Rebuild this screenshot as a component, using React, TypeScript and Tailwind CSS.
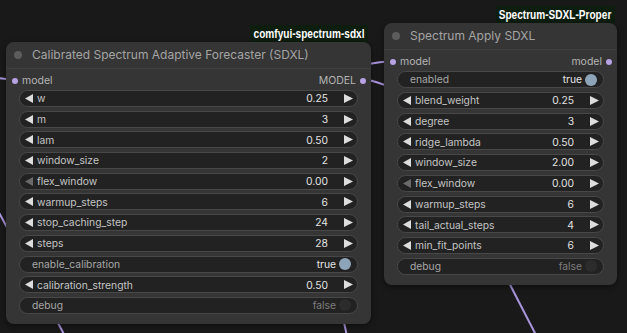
import React from 'react';

type Widget =
  | { kind: 'num'; label: string; value: string; dimLeft?: boolean }
  | { kind: 'toggle'; label: string; on: boolean };

const leftWidgets: Widget[] = [
  { kind: 'num', label: 'w', value: '0.25' },
  { kind: 'num', label: 'm', value: '3' },
  { kind: 'num', label: 'lam', value: '0.50' },
  { kind: 'num', label: 'window_size', value: '2' },
  { kind: 'num', label: 'flex_window', value: '0.00', dimLeft: true },
  { kind: 'num', label: 'warmup_steps', value: '6' },
  { kind: 'num', label: 'stop_caching_step', value: '24' },
  { kind: 'num', label: 'steps', value: '28' },
  { kind: 'toggle', label: 'enable_calibration', on: true },
  { kind: 'num', label: 'calibration_strength', value: '0.50' },
  { kind: 'toggle', label: 'debug', on: false },
];

const rightWidgets: Widget[] = [
  { kind: 'toggle', label: 'enabled', on: true },
  { kind: 'num', label: 'blend_weight', value: '0.25' },
  { kind: 'num', label: 'degree', value: '3' },
  { kind: 'num', label: 'ridge_lambda', value: '0.50' },
  { kind: 'num', label: 'window_size', value: '2.00' },
  { kind: 'num', label: 'flex_window', value: '0.00', dimLeft: true },
  { kind: 'num', label: 'warmup_steps', value: '6' },
  { kind: 'num', label: 'tail_actual_steps', value: '4' },
  { kind: 'num', label: 'min_fit_points', value: '6' },
  { kind: 'toggle', label: 'debug', on: false },
];

const LeftArrow = ({ dim }: { dim?: boolean }) => (
  <svg width="8" height="9" viewBox="0 0 8 9" className="shrink-0">
    <path d="M0 4.5 L8 0 L8 9 Z" fill={dim ? '#6a6a6a' : '#dddddd'} />
  </svg>
);

const RightArrow = () => (
  <svg width="9" height="9" viewBox="0 0 9 9" className="ml-[16px] shrink-0">
    <path d="M9 4.5 L0 0 L0 9 Z" fill="#dddddd" />
  </svg>
);

const WidgetRow = ({ w }: { w: Widget }) => {
  if (w.kind === 'num') {
    return (
      <div className="flex h-[17px] items-center rounded-full border border-[#484848] bg-[#222222] pl-[5px] pr-[4px] text-[10.3px] leading-none">
        <LeftArrow dim={w.dimLeft} />
        <span className="ml-[4px] text-[#c4c4c4]">{w.label}</span>
        <span className="ml-auto text-[#e2e2e2]">{w.value}</span>
        <RightArrow />
      </div>
    );
  }
  return (
    <div className="flex h-[17px] items-center rounded-full border border-[#484848] bg-[#222222] pl-[12px] pr-[6px] text-[10.3px] leading-none">
      <span className="text-[#a6a6a6]">{w.label}</span>
      <span className={`ml-auto ${w.on ? 'text-[#e2e2e2]' : 'text-[#7e7e7e]'}`}>{w.on ? 'true' : 'false'}</span>
      <span className={`ml-[3px] h-[12px] w-[12px] rounded-full ${w.on ? 'bg-[#8ea4b9]' : 'bg-[#2c2c2c]'}`} />
    </div>
  );
};

const Dot = () => <span className="h-[6px] w-[6px] shrink-0 rounded-full bg-[#b7a2e4]" />;

const Node = ({
  title,
  outLabel,
  widgets,
  className,
  gap,
}: {
  title: string;
  outLabel: string;
  widgets: Widget[];
  className: string;
  gap: string;
}) => (
  <div className={`absolute flex flex-col rounded-[8px] bg-[#353535] shadow-[0_2px_6px_rgba(0,0,0,0.45)] ${className}`}>
    <div className="flex h-[27px] items-center border-b border-[#3e3e3e] pl-[8px]">
      <span className="h-[8px] w-[8px] rounded-full bg-[#5c5c5c]" />
      <span className="ml-[10px] text-[12px] text-[#a4a4a4]">{title}</span>
    </div>
    <div className="flex h-[21px] items-center pl-[6px] pr-[5px] pt-[2px] text-[10.5px] text-[#b4b4b4]">
      <Dot />
      <span className="ml-[4px]">model</span>
      <span className="ml-auto mr-[4px]">{outLabel}</span>
      <Dot />
    </div>
    <div className={`flex flex-col px-[13px] ${gap}`}>
      {widgets.map((w) => (
        <WidgetRow key={w.label + w.kind} w={w} />
      ))}
    </div>
  </div>
);

const Badge = ({ text, className }: { text: string; className: string }) => (
  <div className={`absolute flex h-[17px] items-center justify-center whitespace-nowrap bg-[#0d1d0e] font-['Liberation_Sans',sans-serif] text-[12px] font-bold text-white ${className}`}>
    <span className="inline-block scale-x-[0.84]">{text}</span>
  </div>
);

export default function App() {
  return (
    <div className="relative h-[333px] w-[627px] overflow-hidden bg-[#191919] font-['Inter','Liberation_Sans',sans-serif]">
      <svg className="absolute inset-0" width="627" height="333">
        <g stroke="#a995dc" strokeWidth="2" fill="none">
          <path d="M-2 78 L14 80" />
          <path d="M-6 203 L66 338" />
          <path d="M343 318 L347 336" />
          <path d="M504 273 L537 337" />
          <path d="M340 70 Q368 63 392 61" />
          <path d="M363 79 Q376 81 392 88" />
        </g>
      </svg>

      <Badge text="comfyui-spectrum-sdxl" className="left-[250px] top-[25px] w-[118px]" />
      <Badge text="Spectrum-SDXL-Proper" className="left-[496px] top-[6px] w-[119px]" />

      <Node
        title="Calibrated Spectrum Adaptive Forecaster (SDXL)"
        outLabel="MODEL"
        widgets={leftWidgets}
        className="left-[6px] top-[42px] h-[282px] w-[365px]"
        gap="gap-[3.7px]"
      />
      <Node
        title="Spectrum Apply SDXL"
        outLabel="model"
        widgets={rightWidgets}
        className="left-[384px] top-[23px] h-[262px] w-[233px]"
        gap="gap-[3.75px]"
      />
    </div>
  );
}
